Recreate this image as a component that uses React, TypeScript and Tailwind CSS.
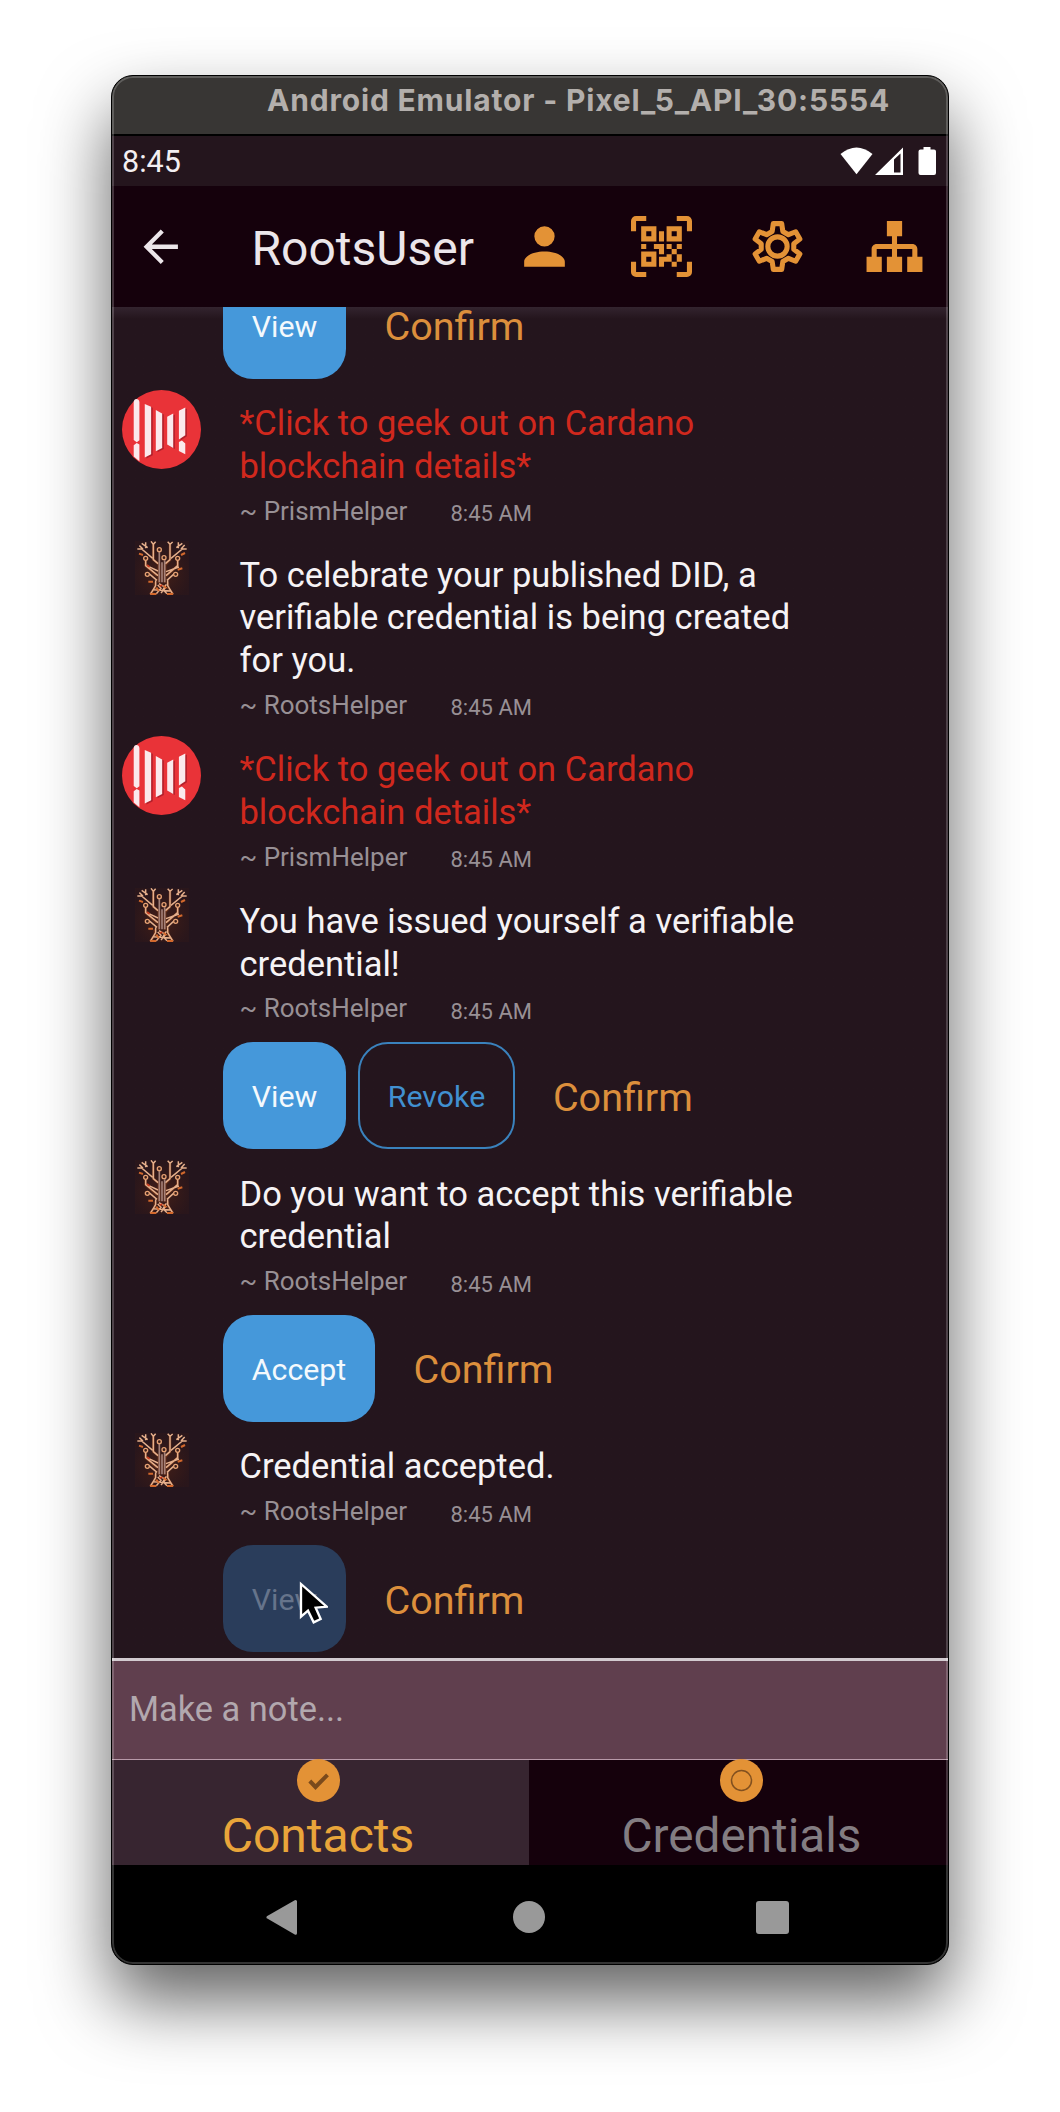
import React from "react";

const ORANGE = "#e39236";

const icons = {
  account:
    "M12,4A4,4 0 0,1 16,8A4,4 0 0,1 12,12A4,4 0 0,1 8,8A4,4 0 0,1 12,4M12,14C16.42,14 20,15.79 20,18V20H4V18C4,15.79 7.58,14 12,14Z",
  qrScan:
    "M4,4H10V10H4V4M20,4V10H14V4H20M14,15H16V13H14V11H16V13H18V11H20V13H18V15H20V18H18V20H16V18H13V20H11V16H14V15M16,15V18H18V15H16M4,20V14H10V20H4M6,6V8H8V6H6M16,6V8H18V6H16M6,16V18H8V16H6M4,11H6V13H4V11M9,11H13V15H11V13H9V11M11,6H13V10H11V6M2,2V6H0V2A2,2 0 0,1 2,0H6V2H2M22,0A2,2 0 0,1 24,2V6H22V2H18V0H22M2,18V22H6V24H2A2,2 0 0,1 0,22V18H2M22,22V18H24V22A2,2 0 0,1 22,24H18V22H22Z",
  sitemap:
    "M9,2V8H11V11H5C3.89,11 3,11.89 3,13V16H1V22H7V16H5V13H11V16H9V22H15V16H13V13H19V16H17V22H23V16H21V13C21,11.89 20.11,11 19,11H13V8H15V2H9Z",
};

function HeaderIcon({ d }: { d: string }) {
  return (
    <svg viewBox="0 0 24 24" className="h-[61px] w-[61px] shrink-0" fill={ORANGE} fillRule="evenodd">
      <path d={d} />
    </svg>
  );
}

function GearIcon() {
  return (
    <svg viewBox="0 0 24 24" className="h-[61px] w-[61px] shrink-0" fill="none" stroke={ORANGE} strokeWidth="2" strokeLinejoin="round">
      <path d="M10.35 3H13.65L14.1 6.1L16.3 7.35L19.15 6.2L20.8 9.05L18.4 10.9V13.1L20.8 14.95L19.15 17.8L16.3 16.65L14.1 17.9L13.65 21H10.35L9.9 17.9L7.7 16.65L4.85 17.8L3.2 14.95L5.6 13.1V10.9L3.2 9.05L4.85 6.2L7.7 7.35L9.9 6.1Z" />
      <circle cx="12" cy="12" r="3.8" />
    </svg>
  );
}

function PrismAvatar() {
  return (
    <svg viewBox="0 0 236 236" className="h-[79px] w-[79px] shrink-0">
      <circle cx="118" cy="118" r="118" fill="#e93338" />
      <g fill="#b3202b" transform="translate(5 3)">
        <path d="M68 42L87 50V192L68 202ZM101 60L120 70V173L101 183ZM135 80L153 70V173L135 163ZM170 62L189 52V135L170 148Z" />
      </g>
      <g fill="#fbe9ec">
        <path d="M35 36Q36 27 43 27Q51 27 52 36V150L44 156L35 149ZM35 165L44 158L52 163V213L35 199Z" />
        <path d="M68 42L87 50V192L68 202ZM101 60L120 70V173L101 183ZM135 80L153 70V173L135 163ZM170 62L189 52V135L170 148ZM170 155L179 151L189 160V192L170 182Z" />
      </g>
    </svg>
  );
}

function TreeAvatar() {
  return (
    <svg viewBox="0 0 162 162" className="h-[54px] w-[54px] shrink-0" fill="none">
      <defs>
        <radialGradient id="glow" cx="0.5" cy="0.6" r="0.55">
          <stop offset="0" stopColor="#6a2c12" stopOpacity="0.5" />
          <stop offset="1" stopColor="#4a1d10" stopOpacity="0.15" />
        </radialGradient>
      </defs>
      <rect width="162" height="162" fill="url(#glow)" />
      <g stroke="#9c4a1e" strokeWidth="8" opacity="0.5">
        <path d="M55 8V56L72 70V125M105 8V56L90 72V125M32 56V74L66 104M128 56V74L94 104M60 124L60 140L46 160M98 124L100 140L114 160" />
      </g>
      <g stroke="#e6b08c" strokeWidth="4.4">
        <path d="M55 10V56L69 68M105 10V56L91 68M48 1L55 10L62 2M98 2L105 10L113 3" />
        <path d="M7 24H20L53 52M20 7L38 20M32 4V22M13 14L24 24M155 24H142L108 52M142 7L124 20M130 4V22M149 12L138 24" />
        <path d="M32 58V74L69 104M128 58V74L93 104M42 98L66 118M118 98L96 118M40 76L69 90M132 78L93 92" />
        <path d="M62 118V134L46 160M98 118V134L114 160M68 132L78 142L64 158M94 130L84 146L96 158M72 128L92 140L78 156M56 146L106 150" />
      </g>
      <path d="M73 32V124M81 64V124M89 58V124" stroke="#a58178" strokeWidth="5" />
      <g stroke="#e6a173" strokeWidth="4" fill="#3a1d18">
        <circle cx="73" cy="26" r="6" />
        <circle cx="87" cy="50" r="6" />
        <circle cx="32" cy="52" r="6" />
        <circle cx="128" cy="52" r="6" />
        <circle cx="37" cy="100" r="6" />
        <circle cx="122" cy="100" r="6" />
      </g>
      <path d="M12 38L24 42M138 42L150 36M128 86L142 82M40 122H54M64 140L72 150M86 134L94 142M46 159H64M96 159H114" stroke="#d2682c" strokeWidth="6" />
      <path d="M36 72L44 78M74 136L82 132" stroke="#c93b1e" strokeWidth="5" />
    </svg>
  );
}

type MessageProps = { from: "RootsHelper" | "PrismHelper"; lines: string[] };

function Message({ from, lines }: MessageProps) {
  const prism = from === "PrismHelper";
  return (
    <div className="flex pl-[10px]">
      <div className="flex w-[79px] shrink-0 justify-center pt-[1.8px]">{prism ? <PrismAvatar /> : <TreeAvatar />}</div>
      <div className="ml-[38.5px] pt-[14.1px]">
        <div className={prism ? "text-[34.5px] leading-[42.7px] text-[#d0281d]" : "text-[34.5px] leading-[42.7px] text-[#f6f3f5]"}>
          {lines.map((l) => (
            <p key={l} className="whitespace-nowrap">
              {l}
            </p>
          ))}
        </div>
        <div className="flex h-[52.2px] items-start pt-[8px] text-[#989095]">
          <span className="w-[211px] whitespace-nowrap text-[26px] leading-[30px]">~ {from}</span>
          <span className="mt-[3.5px] whitespace-nowrap text-[22px] leading-[30px]">8:45 AM</span>
        </div>
      </div>
    </div>
  );
}

function Cursor() {
  return (
    <svg viewBox="0 0 90 135" className="absolute top-[35px] left-[75px] h-[45px] w-[30px]">
      <path d="M9 12V110L30 92L47 127L68 117L53 83L86 80Z" fill="#000" stroke="#fff" strokeWidth="7" />
    </svg>
  );
}

function Actions({ labels, disabled, revoke }: { labels: string; disabled?: boolean; revoke?: boolean }) {
  return (
    <div className="flex items-center pt-[4.5px] pb-[9.1px] pl-[110.8px] text-[30.3px]">
      <button
        className={
          disabled
            ? "relative h-[107.5px] rounded-[30px] bg-[#2a3d5b] px-[29px] pt-[3px] text-[#66748b]"
            : "relative h-[107.5px] rounded-[30px] bg-[#4598da] px-[29px] pt-[3px] text-[#f4f9fd]"
        }
      >
        {labels}
        {disabled && <Cursor />}
      </button>
      {revoke && (
        <button className="ml-[12px] h-[107.5px] rounded-[30px] border-2 border-[#3a82bd] px-[27.5px] pt-[3px] text-[#4190d0]">
          Revoke
        </button>
      )}
      <span className="ml-[38.2px] pt-[4px] text-[39.5px] leading-[46px] text-[#dc8f3c]">Confirm</span>
    </div>
  );
}

export default function App() {
  return (
    <div className="flex h-[2112px] w-[1060px] justify-center overflow-hidden bg-white pt-[75px] font-['Roboto',sans-serif]">
      <div className="relative flex h-[1890px] w-[838px] flex-col overflow-hidden rounded-[22px] border border-black bg-black shadow-[0_36px_70px_rgba(0,0,0,0.62)]">
        <div className="flex h-[60px] shrink-0 items-start border-b-2 border-black bg-[#383634] pt-[5.5px] pl-[155px]">
          <span className="whitespace-nowrap font-['Inter',sans-serif] text-[30px] leading-[36px] font-bold tracking-[0.82px] text-[#b3afac]">
            Android Emulator - Pixel_5_API_30:5554
          </span>
        </div>

        <div className="flex h-[50px] shrink-0 items-start justify-between bg-[#24151d] pr-[12.5px] pl-[10px]">
          <span className="pt-[7.5px] text-[30.5px] leading-[36px] text-[#f3eff2]">8:45</span>
          <svg viewBox="0 0 96 28" className="mt-[10.5px] h-[28px] w-[96px]" fill="#fff">
            <path d="M0.5 7Q16.5 -6 32.5 7L16.5 27.3Z" />
            <path fillRule="evenodd" d="M35 28L63 0.5V28ZM54 12.5V25.5H60.5V6.5Z" />
            <path d="M83.5 0H90.5V2.5H94Q96 2.5 96 4.5V26Q96 28 94 28H80.5Q78.5 28 78.5 26V4.5Q78.5 2.5 80.5 2.5H83.5Z" />
          </svg>
        </div>

        <div className="flex h-[120.5px] shrink-0 items-center bg-[#15010c] pl-[23px]">
          <svg viewBox="0 0 24 24" className="h-[51.5px] w-[51.5px] shrink-0" fill="#ece6ea">
            <path d="M20 11H7.83l5.59-5.59L12 4l-8 8 8 8 1.41-1.41L7.83 13H20v-2z" />
          </svg>
          <h1 className="ml-[65px] w-[262.5px] pt-[5px] whitespace-nowrap text-[48px] leading-[56px] text-[#ece6ea]">RootsUser</h1>
          <div className="flex gap-[55.6px]">
            <HeaderIcon d={icons.account} />
            <HeaderIcon d={icons.qrScan} />
            <GearIcon />
            <HeaderIcon d={icons.sitemap} />
          </div>
        </div>

        <div className="h-[1351.5px] shrink-0 overflow-hidden bg-[#24151d] bg-linear-to-b from-[#33242f] to-[#24151d] to-[12px]">
          <div className="-mt-[39.6px]">
            <Actions labels="View" />
            <Message from="PrismHelper" lines={["*Click to geek out on Cardano", "blockchain details*"]} />
            <Message
              from="RootsHelper"
              lines={["To celebrate your published DID, a", "verifiable credential is being created", "for you."]}
            />
            <Message from="PrismHelper" lines={["*Click to geek out on Cardano", "blockchain details*"]} />
            <Message from="RootsHelper" lines={["You have issued yourself a verifiable", "credential!"]} />
            <Actions labels="View" revoke />
            <Message from="RootsHelper" lines={["Do you want to accept this verifiable", "credential"]} />
            <Actions labels="Accept" />
            <Message from="RootsHelper" lines={["Credential accepted."]} />
            <Actions labels="View" disabled />
          </div>
        </div>

        <div className="flex h-[102px] shrink-0 items-center border-t-[3px] border-b-[1.5px] border-t-[#d3cbd0] border-b-[#b89aa9] bg-[#603f4e] pb-[1px] pl-[17px] text-[34.4px] text-[#b2a8ae]">
          <span className="whitespace-nowrap">Make a note...</span>
        </div>

        <div className="flex h-[105px] shrink-0">
          <div className="flex w-[417px] flex-col items-center bg-[#372530] pr-[5px]">
            <svg viewBox="0 0 43 43" className="relative -mt-[1.5px] h-[43px] w-[43px]">
              <circle cx="21.5" cy="21.5" r="21.5" fill={ORANGE} />
              <path d="M12.8 22L18.5 28L30.5 15.8" fill="none" stroke="#7a4a1c" strokeWidth="4" />
            </svg>
            <span className="mt-[6px] text-[48px] leading-[56px] text-[#e9a53a]">Contacts</span>
          </div>
          <div className="flex flex-1 flex-col items-center bg-[#15010c] pl-[6px]">
            <svg viewBox="0 0 43 43" className="relative -mt-[1.5px] h-[43px] w-[43px]">
              <circle cx="21.5" cy="21.5" r="21.5" fill={ORANGE} />
              <circle cx="21.5" cy="21.5" r="10" fill="none" stroke="#81501f" strokeWidth="1.5" />
            </svg>
            <span className="mt-[6px] text-[47.7px] leading-[56px] text-[#837d82]">Credentials</span>
          </div>
        </div>

        <div className="flex flex-1 items-start bg-black pt-[34px] pl-[154px]">
          <svg viewBox="0 0 32 36" className="h-[36px] w-[32px]">
            <path d="M2 18.3L29.5 2.5V34.2Z" fill="#999" stroke="#999" strokeWidth="3" strokeLinejoin="round" />
          </svg>
          <div className="mt-[1.5px] ml-[215px] h-[32px] w-[32px] rounded-full bg-[#999]" />
          <div className="mt-[1.5px] ml-[211px] h-[33px] w-[33px] rounded-[3px] bg-[#999]" />
        </div>

        <div className="pointer-events-none absolute inset-0 rounded-[21px] border-2 border-white/20" />
      </div>
    </div>
  );
}
